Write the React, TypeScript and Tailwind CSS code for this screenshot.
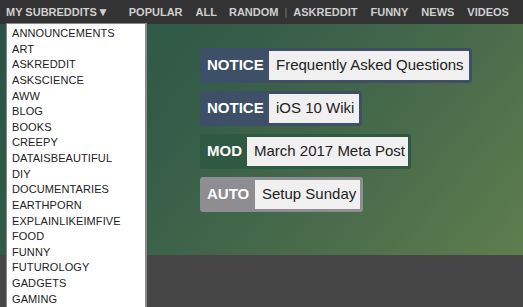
import React from "react";

const subs = [
  "ANNOUNCEMENTS",
  "ART",
  "ASKREDDIT",
  "ASKSCIENCE",
  "AWW",
  "BLOG",
  "BOOKS",
  "CREEPY",
  "DATAISBEAUTIFUL",
  "DIY",
  "DOCUMENTARIES",
  "EARTHPORN",
  "EXPLAINLIKEIMFIVE",
  "FOOD",
  "FUNNY",
  "FUTUROLOGY",
  "GADGETS",
  "GAMING",
];

function Flair({
  label,
  text,
  bg,
  labelW,
  textW,
}: {
  label: string;
  text: string;
  bg: string;
  labelW: string;
  textW: string;
}) {
  return (
    <div className={`flex p-[3px] rounded-[3px] h-[35px] ${bg}`}>
      <div className={`${labelW} pl-[4px] flex items-center text-white font-bold text-[15px]`}>{label}</div>
      <div className={`${textW} bg-[#f0f0f0] pl-[7px] flex items-center text-[15px] text-[#222] whitespace-nowrap`}>
        {text}
      </div>
    </div>
  );
}

export default function App() {
  return (
    <div
      className="relative w-[523px] h-[307px] overflow-hidden bg-[#464646]"
      style={{ fontFamily: '"Liberation Sans", Arial, sans-serif' }}
    >
      <div className="h-[24px] bg-[#333333] flex items-center pl-[6px] text-[11px] font-bold text-[#cfcfcf] whitespace-nowrap">
        <span>
          MY SUBREDDITS<span className="text-[12px]">▼</span>
        </span>
        <span className="ml-[20px]">POPULAR</span>
        <span className="ml-[13px]">ALL</span>
        <span className="ml-[12px]">RANDOM</span>
        <span className="ml-[6px] font-normal text-[#777]">|</span>
        <span className="ml-[6px]">ASKREDDIT</span>
        <span className="ml-[13px]">FUNNY</span>
        <span className="ml-[13px]">NEWS</span>
        <span className="ml-[13px]">VIDEOS</span>
      </div>
      <div className="h-[231px] bg-[linear-gradient(130deg,#2b5446_0%,#345c48_35%,#4a6c4b_70%,#5e7e4d_100%)] pl-[200px] pt-[24px] flex flex-col gap-[8px] items-start">
        <Flair label="NOTICE" text="Frequently Asked Questions" bg="bg-[#3d5068]" labelW="w-[66px]" textW="w-[200px]" />
        <Flair label="NOTICE" text="iOS 10 Wiki" bg="bg-[#3d5068]" labelW="w-[66px]" textW="w-[90px]" />
        <Flair label="MOD" text="March 2017 Meta Post" bg="bg-[#2f5940]" labelW="w-[44px]" textW="w-[161px]" />
        <Flair label="AUTO" text="Setup Sunday" bg="bg-[#8d8d92]" labelW="w-[52px]" textW="w-[105px]" />
      </div>
      <div className="absolute left-[6px] top-[23px] w-[141px] h-[300px] bg-white border border-[#8a8a8a] border-r-2 pt-[2px] pl-[5px]">
        {subs.map((s) => (
          <div key={s} className="text-[11px] leading-[15.63px] text-[#222] tracking-[0.1px]">
            {s}
          </div>
        ))}
      </div>
    </div>
  );
}
